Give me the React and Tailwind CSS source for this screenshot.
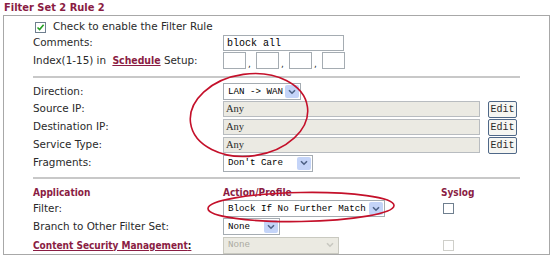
import React from "react";

const maroon = "text-[#8a1c43]";

function Arrow({ disabled }) {
  return (
    <span
      className={`flex h-[13px] w-[14px] items-center justify-center rounded-[2px] ${
        disabled ? "bg-[#ebeae2]" : "bg-[#c4d4f8]"
      }`}
    >
      <svg width="8" height="6" viewBox="0 0 8 6">
        <path
          d="M1 1.2 L4 4.2 L7 1.2"
          fill="none"
          stroke={disabled ? "#c8c8c0" : "#4d6185"}
          strokeWidth="1.6"
        />
      </svg>
    </span>
  );
}

function Select({ w, value, disabled }) {
  return (
    <div
      className={`flex h-[17px] items-center justify-between border pl-[4px] pr-[1px] text-[9.2px] leading-none font-['Liberation_Mono',monospace] ${
        disabled
          ? "border-[#c9c9c0] bg-[#ebeae2] text-[#a9a9a0]"
          : "border-[#a5acb2] bg-white text-black"
      } ${w}`}
    >
      <span className="whitespace-pre">{value}</span>
      <Arrow disabled={disabled} />
    </div>
  );
}

function Check({ checked, disabled }) {
  return (
    <span
      className={`flex h-[11px] w-[11px] items-center justify-center border ${
        disabled ? "border-[#cfcfca]" : "border-[#6f7f8f]"
      } bg-white`}
    >
      {checked && (
        <svg width="9" height="9" viewBox="0 0 9 9">
          <path d="M1.5 4.5 L3.6 6.6 L7.6 1.8" fill="none" stroke="#23a021" strokeWidth="1.6" />
        </svg>
      )}
    </span>
  );
}

function Row({ h, label, children }) {
  return (
    <div className={`grid grid-cols-[190px_1fr] items-center ${h}`}>
      <div className="whitespace-nowrap">{label}</div>
      <div className="flex items-center">{children}</div>
    </div>
  );
}

function AnyRow({ label }) {
  return (
    <Row h="h-[18px]" label={label}>
      <div className="flex h-[16px] w-[257px] items-center border border-[#b8bcc0] bg-[#ebeae3] pl-[2px] text-[10.5px] font-['Liberation_Serif',serif]">
        Any
      </div>
      <button className="ml-[8px] flex h-[17px] w-[29px] items-center justify-center rounded-[2px] border border-[#4f6888] bg-[#f6f6f2] text-[10px] font-['Liberation_Mono',monospace]">
        Edit
      </button>
    </Row>
  );
}

export default function App() {
  return (
    <div className="relative h-[259px] w-[554px] bg-white font-['DejaVu_Sans',sans-serif] text-[10.4px] text-[#2a2a2a]">
      <div className={`h-[15px] pl-[4px] pt-[1px] text-[11px] font-bold leading-[14px] font-['DejaVu_Sans_Condensed',sans-serif] ${maroon}`}>
        Filter Set 2 Rule 2
      </div>
      <div className="ml-[3px] h-[240px] w-[547px] border border-[#a8a8a8] pl-[29px]">
        <div className="flex h-[19px] items-center pl-[2px] pt-[3px]">
          <Check checked />
          <span className="ml-[7px]">Check to enable the Filter Rule</span>
        </div>
        <Row h="h-[16px]" label="Comments:">
          <div className="flex h-[16px] w-[121px] items-center border border-[#a5acb2] pl-[3px] text-[10px] font-['Liberation_Mono',monospace] text-black">
            block all
          </div>
        </Row>
        <Row
          h="h-[19px]"
          label={
            <span>
              Index(1-15) in{" "}
              <span className={`ml-[3px] font-bold underline ${maroon} font-['DejaVu_Sans_Condensed',sans-serif]`}>
                Schedule
              </span>{" "}
              Setup:
            </span>
          }
        >
          {[0, 1, 2, 3].map((i) => (
            <React.Fragment key={i}>
              <div className="h-[17px] w-[23px] border border-[#a5acb2]" />
              {i < 3 && <span className="w-[10px] self-end pl-[2px] text-[9px] leading-[10px]">,</span>}
            </React.Fragment>
          ))}
        </Row>
        <div className="flex h-[13px] items-center">
          <div className="h-0 w-[487px] border-t-2 border-[#c8c8c8]" />
        </div>
        <Row h="h-[17px]" label="Direction:">
          <Select w="w-[78px]" value="LAN -> WAN" />
        </Row>
        <AnyRow label="Source IP:" />
        <AnyRow label="Destination IP:" />
        <AnyRow label="Service Type:" />
        <Row h="h-[18px]" label="Fragments:">
          <Select w="w-[90px]" value="Don't Care" />
        </Row>
        <div className="flex h-[12px] items-center">
          <div className="h-0 w-[487px] border-t-2 border-[#c8c8c8]" />
        </div>
        <div className={`grid h-[16px] grid-cols-[190px_218px_1fr] items-center font-bold ${maroon} font-['DejaVu_Sans_Condensed',sans-serif] text-[10px]`}>
          <span>Application</span>
          <span>Action/Profile</span>
          <span>Syslog</span>
        </div>
        <div className="grid h-[17px] grid-cols-[190px_220px_1fr] items-center">
          <span>Filter:</span>
          <Select w="w-[162px]" value="Block If No Further Match" />
          <Check />
        </div>
        <Row h="h-[19px]" label="Branch to Other Filter Set:">
          <Select w="w-[57px]" value="None" />
        </Row>
        <div className="grid h-[18px] grid-cols-[190px_220px_1fr] items-center">
          <span className={`font-bold underline ${maroon} font-['DejaVu_Sans_Condensed',sans-serif] text-[10px]`}>
            Content Security Management<span className="text-[#2a2a2a] no-underline">:</span>
          </span>
          <Select w="w-[116px]" value="None" disabled />
          <Check disabled />
        </div>
      </div>
      <svg className="pointer-events-none absolute left-0 top-0" width="554" height="259">
        <ellipse cx="249" cy="115" rx="59" ry="41" fill="none" stroke="#c4102a" strokeWidth="1.6" transform="rotate(-8 249 115)" />
        <ellipse cx="301" cy="207" rx="93" ry="14.5" fill="none" stroke="#c4102a" strokeWidth="1.6" transform="rotate(-1 301 207)" />
      </svg>
    </div>
  );
}
